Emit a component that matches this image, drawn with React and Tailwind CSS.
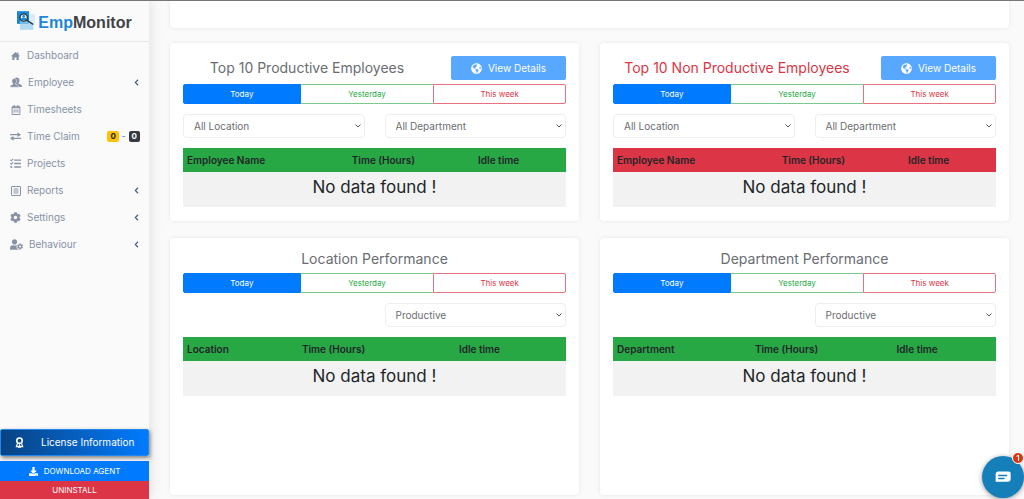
import React, { useState } from 'react';
import { FaRegCalendarAlt, FaTasks, FaCog, FaUserCog, FaChevronLeft, FaDownload, FaGlobeAmericas } from 'react-icons/fa';

// --- ICONS ---
const HomeIcon = () => (
  <svg viewBox="0 0 18 16" className="w-[9px] h-2" fill="currentColor">
    <path d="M9 0 0 8.500h2.500V16H7v-5h4v5h4.500V8.500H18L15 5.600V1h-2.500v2.300z" />
  </svg>
);

const PeopleIcon = () => (
  <svg viewBox="0 0 24 22" className="w-3 h-[11px]" fill="currentColor">
    <path d="M9 2c2-1.800 10-2.500 10 4 0 2.600-.8 4.300-2 5.500v1.500l4 2c1.800.9 3 2 3 5H14z" />
    <path d="M8.500 3c3.200 0 4.700 2 4.700 4.800 0 2.400-.8 4-2 5.200v1.400l4.200 2c1.400.7 2.100 1.600 2.100 4.100H0c0-2.500.6-3.400 2-4.100l3.800-2V13c-1.200-1.200-2-2.800-2-5.200C3.800 5 5.300 3 8.500 3z" stroke="#fafafa" strokeWidth="1" />
  </svg>
);

const SwapIcon = () => (
  <svg viewBox="0 0 22 18" className="w-[11px] h-[9px]" fill="currentColor">
    <path d="M0 4h15V.5L22 5.300 15 10V6.500H0zM22 11.500H7V8L0 12.700l7 4.800V14h15z" />
  </svg>
);

const ReportIcon = () => (
  <svg viewBox="0 0 20 20" className="size-[10px]" fill="none" stroke="currentColor" strokeWidth="2">
    <rect x="1" y="1" width="18" height="18" rx="1" />
    <path d="M5 6h10M5 10h10M5 14h10" />
  </svg>
);

const AwardIcon = () => (
  <svg viewBox="0 0 20 24" className="w-[9px] h-[11px]" fill="none" stroke="currentColor">
    <circle cx="10" cy="8" r="6" strokeWidth="3.500" />
    <path d="M5.500 14 3 21l3.500-.5L8.500 23l1.500-5 1.500 5 2-2.500 3.500.5-2.500-7" strokeWidth="2.500" />
  </svg>
);

const LogoMark = () => (
  <svg viewBox="0 0 54 56" className="w-[18px] h-[19px]">
    <rect x="0" y="0" width="36" height="38" fill="#1687d9" />
    <rect x="36" y="9" width="18" height="32" fill="#d7ebf8" />
    <rect x="9" y="38" width="40" height="18" fill="#b4daf3" />
    <rect x="9" y="28" width="27" height="10" fill="#79bdec" />
    <circle cx="20" cy="19" r="11" fill="#fff" stroke="#26323d" strokeWidth="4" />
    <circle cx="20" cy="15" r="4" fill="#1687d9" />
    <path d="M12 25c0-8 16-8 16 0-4 4-12 4-16 0z" fill="#1687d9" />
    <path d="m29 27 18 12" stroke="#26323d" strokeWidth="4" strokeLinecap="round" />
  </svg>
);

// --- SIDEBAR ---
const menu = [
  { label: 'Dashboard', icon: <HomeIcon /> },
  { label: 'Employee', icon: <PeopleIcon />, sub: true },
  { label: 'Timesheets', icon: <FaRegCalendarAlt size={10} /> },
  { label: 'Time Claim', icon: <SwapIcon />, badges: true },
  { label: 'Projects', icon: <FaTasks size={11} /> },
  { label: 'Reports', icon: <ReportIcon />, sub: true },
  { label: 'Settings', icon: <FaCog size={11} />, sub: true },
  { label: 'Behaviour', icon: <FaUserCog size={13} />, sub: true },
];

const Sidebar = () => (
  <aside className="sticky top-0 h-screen w-[149px] shrink-0 flex flex-col bg-[#fafafa] shadow-[2px_0_12px_rgba(0,0,0,0.1)]">
    <a href="#" className="h-[42px] shrink-0 flex items-center justify-center border-b border-gray-200">
      <LogoMark />
      <span className="ml-[3px] mt-1 font-['Liberation_Sans',sans-serif] font-bold text-[16px] text-[#3f4347]">
        <span className="text-[#1c86d8]">Emp</span>Monitor
      </span>
    </a>
    <nav className="flex-1">
      {menu.map((item) => (
        <a key={item.label} href="#" className="flex items-center h-[27px] pl-[10px] pr-[9px] text-[10px] text-[#8792a5]">
          <span className="min-w-[11px] mr-[6px] flex justify-center">{item.icon}</span>
          <span className="flex-1">{item.label}</span>
          {item.sub && <FaChevronLeft size={7} className="text-[#3f5382]" />}
          {item.badges && (
            <span className="flex items-center gap-[3px] font-bold text-[8px] leading-[11px]">
              <span className="px-[3px] rounded-[2px] bg-[#ffc107] text-[#212529]">0</span>
              -
              <span className="px-[3px] rounded-[2px] bg-[#343a40] text-white">0</span>
            </span>
          )}
        </a>
      ))}
    </nav>
    <button className="h-[27px] mb-[5px] flex items-center pl-[14px] rounded-[2px] border border-[#2287ee] bg-linear-to-r from-[#084382] to-[#007bff] text-white text-[10px] shadow-[1px_2px_4px_rgba(0,0,0,0.5)]">
      <AwardIcon />
      <span className="ml-[17px]">License Information</span>
    </button>
    <button className="h-5 flex items-center justify-center gap-[6px] bg-[#007bff] text-white text-[8px]">
      <FaDownload size={9} />
      DOWNLOAD AGENT
    </button>
    <button className="h-[18px] bg-[#dc3545] text-white text-[8px]">UNINSTALL</button>
  </aside>
);

// --- CARD PARTS ---
const PeriodTabs = () => {
  const [active, setActive] = useState('Today');
  const base = 'h-5 border text-[8px]';
  return (
    <div className="grid grid-cols-[118fr_133fr_133fr]">
      <button
        onClick={() => setActive('Today')}
        className={`${base} rounded-l-[2px] border-[#007bff] ${active === 'Today' ? 'bg-[#007bff] text-white' : 'text-[#007bff]'}`}
      >
        Today
      </button>
      <button
        onClick={() => setActive('Yesterday')}
        className={`${base} border-x-0 border-[#7cc98d] ${active === 'Yesterday' ? 'bg-[#28a745] text-white' : 'text-[#28a745]'}`}
      >
        Yesterday
      </button>
      <button
        onClick={() => setActive('This week')}
        className={`${base} rounded-r-[2px] border-[#e5727e] ${active === 'This week' ? 'bg-[#dc3545] text-white' : 'text-[#dc3545]'}`}
      >
        This week
      </button>
    </div>
  );
};

const Filter = ({ label, options }) => (
  <div className="relative">
    <select aria-label={label} className="block appearance-none w-full h-6 pl-[10px] pr-4 rounded-[4px] border border-[#eceef0] bg-white text-[10px] text-[#6a6d71] outline-none">
      {options.map((o) => <option key={o}>{o}</option>)}
    </select>
    <svg viewBox="0 0 12 8" className="absolute right-1 top-1/2 -translate-y-1/2 w-[6px] h-1 pointer-events-none" fill="none" stroke="#555" strokeWidth="2">
      <path d="m1 1 5 5 5-5" />
    </svg>
  </div>
);

const DataTable = ({ columns, widths, head }) => (
  <table className="w-full mt-[10px] table-fixed border-collapse">
    <thead>
      <tr className={`h-6 text-[10px] text-[#212529] ${head}`}>
        {columns.map((c, i) => (
          <th key={c} scope="col" className={`px-1 py-0 text-left font-semibold ${widths[i]}`}>{c}</th>
        ))}
      </tr>
    </thead>
    <tbody>
      <tr className="h-[35px] bg-[#f2f2f2]">
        <td colSpan={3} className="pb-[6px] text-center text-[17px] leading-5 text-[#212529]">No data found !</td>
      </tr>
    </tbody>
  </table>
);

const card = 'rounded-[4px] bg-white shadow-[0_0_4px_rgba(0,0,0,0.08)] px-[13px]';

const EmployeeCard = ({ title, titleColor, head }) => (
  <section className={`${card} pt-[13px] pb-[14px]`}>
    <div className="flex items-center gap-5 mb-1">
      <h2 className={`flex-1 text-center whitespace-nowrap text-sm leading-6 ${titleColor}`}>{title}</h2>
      <button className="w-[115px] h-6 flex items-center justify-center gap-[6px] rounded-[2px] bg-[#59a8ff] text-white text-[10px]">
        <FaGlobeAmericas size={11} />
        View Details
      </button>
    </div>
    <PeriodTabs />
    <div className="grid grid-cols-2 gap-5 mt-[10px]">
      <Filter label="Location" options={['All Location']} />
      <Filter label="Department" options={['All Department']} />
    </div>
    <DataTable columns={['Employee Name', 'Time (Hours)', 'Idle time']} widths={['w-[43%]', 'w-[33%]', 'w-[24%]']} head={head} />
  </section>
);

const PerformanceCard = ({ title, columns, widths }) => (
  <section className={`${card} pt-[11px] pb-[99px]`}>
    <h2 className="mb-[4px] text-center text-sm leading-5 text-[#6a6d71]">{title}</h2>
    <PeriodTabs />
    <div className="grid grid-cols-2 gap-5 mt-[10px]">
      <div className="col-start-2">
        <Filter label="Productivity" options={['Productive', 'Non Productive']} />
      </div>
    </div>
    <DataTable columns={columns} widths={widths} head="bg-[#28a745]" />
  </section>
);

// --- PAGE ---
export default function App() {
  return (
    <div className="min-h-screen flex bg-[#fafafa] font-[Inter,sans-serif]">
      <div className="fixed top-0 inset-x-0 z-20 h-px bg-[#77777a]" />
      <Sidebar />
      <main className="flex-1 min-w-0 pl-[21px] pr-[15px] pb-1">
        <div className="h-7 rounded-b-[4px] bg-white shadow-[0_0_4px_rgba(0,0,0,0.08)]" />
        <div className="grid grid-cols-2 gap-x-[21px] gap-y-[17px] mt-[15px]">
          <EmployeeCard title="Top 10 Productive Employees" titleColor="text-[#6a6d71]" head="bg-[#28a745]" />
          <EmployeeCard title="Top 10 Non Productive Employees" titleColor="text-[#dc3545]" head="bg-[#dc3545]" />
          <PerformanceCard
            title="Location Performance"
            columns={['Location', 'Time (Hours)', 'Idle time']}
            widths={['w-[30%]', 'w-[41%]', 'w-[29%]']}
          />
          <PerformanceCard
            title="Department Performance"
            columns={['Department', 'Time (Hours)', 'Idle time']}
            widths={['w-[36%]', 'w-[37%]', 'w-[27%]']}
          />
        </div>
      </main>

      {/* Chat launcher */}
      <button aria-label="Open chat" className="fixed right-0 bottom-px size-[42px] flex items-center justify-center rounded-full bg-[#147fb9] shadow-[0_1px_5px_rgba(0,0,0,0.4)]">
        <svg viewBox="0 0 48 38" className="w-4 h-[13px]">
          <path d="M10 1h30c5 0 7 2 7 7v15c0 6-3 9-8 9H2c-1 0-1-1 0-2V9c0-5 3-8 8-8z" fill="#fff" />
          <path d="M11 13h24M11 22h16" stroke="#147fb9" strokeWidth="4" strokeLinecap="round" />
        </svg>
        <span className="absolute -top-1 right-0 size-3 flex items-center justify-center rounded-full border border-white bg-[#dd3410] text-white text-[8px] leading-none font-semibold">1</span>
      </button>
    </div>
  );
}
